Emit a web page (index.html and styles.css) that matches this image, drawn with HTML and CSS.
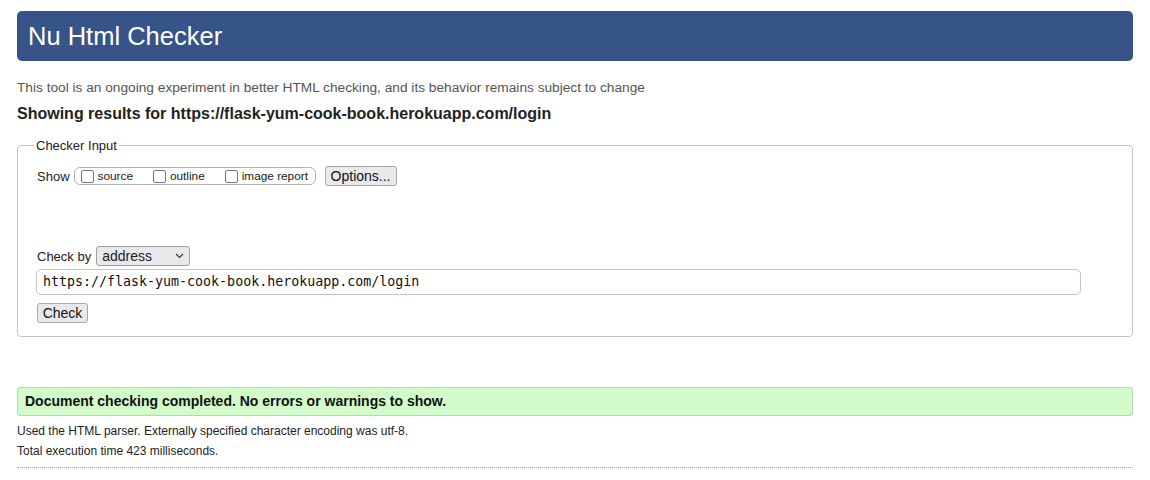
FILE: index.html
```html
<!DOCTYPE html>
<html>
<head>
<meta charset="utf-8">
<link rel="stylesheet" href="styles.css">
</head>
<body>
<h1 class="banner">Nu Html Checker</h1>
<p class="intro">This tool is an ongoing experiment in better HTML checking, and its behavior remains subject to change</p>
<p class="showing">Showing results for https://flask-yum-cook-book.herokuapp.com/login</p>
<fieldset class="input-box">
  <legend>Checker Input</legend>
  <div class="show-row">
    <span class="lbl">Show</span>
    <span class="group">
      <span class="opt"><span class="cb"></span>source</span>
      <span class="opt"><span class="cb"></span>outline</span>
      <span class="opt"><span class="cb"></span>image report</span>
    </span>
    <span class="btn opts">Options...</span>
  </div>
  <div class="checkby-row">
    <span class="lbl">Check by</span>
    <span class="select">address<svg class="chev" width="9" height="6" viewBox="0 0 9 6"><path d="M1 1 L4.5 4.5 L8 1" fill="none" stroke="#333" stroke-width="1.1"/></svg></span>
  </div>
  <div class="url">https://flask-yum-cook-book.herokuapp.com/login</div>
  <div class="check-row"><span class="btn check">Check</span></div>
</fieldset>
<div class="success">Document checking completed. No errors or warnings to show.</div>
<p class="details">Used the HTML parser. Externally specified character encoding was utf-8.</p>
<p class="details">Total execution time 423 milliseconds.</p>
<div class="rule"></div>
</body>
</html>
```
FILE: styles.css
```css
html, body { margin: 0; padding: 0; background: #fff; }
body {
  padding: 11px 17px 0 17px;
  font-family: "Liberation Sans", Arial, sans-serif;
  color: #222;
}
.banner {
  margin: 0;
  height: 50px;
  box-sizing: border-box;
  background: #375489;
  color: #fff;
  border-radius: 5px;
  font-weight: normal;
  font-size: 25.5px;
  line-height: 50px;
  padding-left: 11px;
}
.intro {
  margin: 18px 0 0 0;
  font-size: 13.7px;
  line-height: 17px;
  color: #555;
}
.showing {
  margin: 8px 0 0 0;
  font-size: 16px;
  font-weight: bold;
  line-height: 20px;
  color: #222;
}
.input-box {
  margin: 14px 0 0 0;
  border: 1px solid #c4c4c4;
  border-radius: 4px;
  padding: 10px 19px 12px 19px;
  height: 199px;
  box-sizing: border-box;
}
.input-box legend {
  font-size: 13px;
  padding: 0 2px;
  margin-left: -3px;
  color: #222;
}
.show-row {
  display: flex;
  align-items: center;
  font-size: 13px;
  margin-top: 3px;
}
.lbl { font-size: 13px; margin-right: 4px; }
.group {
  display: inline-flex;
  align-items: center;
  border: 1px solid #b5b5b5;
  border-radius: 6px;
  height: 18px;
  width: 242px;
  box-sizing: border-box;
  padding: 0 6px 0 6px;
  gap: 20px;
  font-size: 11.8px;
}
.opt { display: inline-flex; align-items: center; }
.cb {
  display: inline-block;
  width: 13px;
  height: 13px;
  border: 1.5px solid #7a7a86;
  border-radius: 2px;
  margin-right: 4px;
  box-sizing: border-box;
}
.btn {
  display: inline-flex;
  align-items: center;
  justify-content: center;
  height: 20px;
  box-sizing: border-box;
  border: 1px solid #a8a8a8;
  border-radius: 3px;
  background: #e9e9ed;
  font-size: 14px;
  padding: 0 5px;
  color: #111;
}
.opts { margin-left: 9px; width: 72px; }
.check { width: 51px; }
.checkby-row {
  display: flex;
  align-items: center;
  margin-top: 60px;
}
.select {
  display: inline-flex;
  align-items: center;
  justify-content: space-between;
  width: 94px;
  height: 20px;
  box-sizing: border-box;
  border: 1px solid #a0a0a0;
  border-radius: 3px;
  background: #e9e9ed;
  font-size: 14px;
  padding: 0 5px 0 5px;
  margin-left: 1px;
}
.url {
  margin-top: 3px;
  margin-left: -1px;
  width: 1045px;
  height: 26px;
  box-sizing: border-box;
  border: 1px solid #c4c4c4;
  border-radius: 5px;
  font-family: "DejaVu Sans Mono", monospace;
  font-size: 13.3px;
  line-height: 24px;
  padding-left: 6px;
  color: #111;
}
.check-row { margin-top: 8px; display: flex; }
.success {
  margin-top: 50px;
  height: 29px;
  box-sizing: border-box;
  background: #d1fbc9;
  border: 1px solid #b6d8b0;
  border-radius: 3px;
  font-weight: bold;
  font-size: 14px;
  line-height: 27px;
  padding-left: 7px;
  color: #111;
}
.details {
  margin: 0;
  font-size: 12px;
  line-height: 20px;
  color: #222;
}
.success + .details { margin-top: 5px; }
.rule {
  margin-top: 6px;
  border-top: 1px dotted #a0a0a0;
}
```
